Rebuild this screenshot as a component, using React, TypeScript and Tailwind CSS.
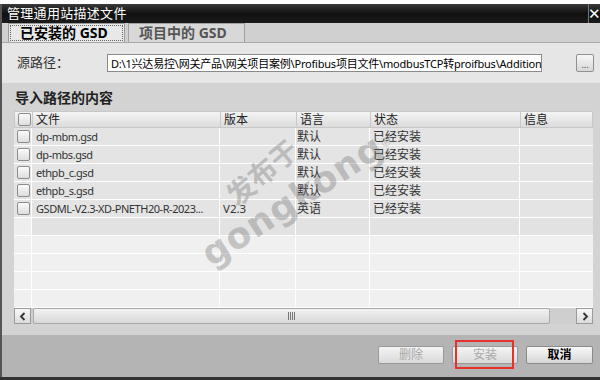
import React from "react";

const FONT = { fontFamily: '"Noto Sans", "Noto Sans CJK SC", sans-serif' };

const rows = [
  { f: "dp-mbm.gsd", v: "", l: "默认", s: "已经安装" },
  { f: "dp-mbs.gsd", v: "", l: "默认", s: "已经安装" },
  { f: "ethpb_c.gsd", v: "", l: "默认", s: "已经安装" },
  { f: "ethpb_s.gsd", v: "", l: "默认", s: "已经安装" },
  { f: "GSDML-V2.3-XD-PNETH20-R-2023...", v: "V2.3", l: "英语", s: "已经安装" },
];

function Check() {
  return (
    <div className="w-[13px] h-[13px] rounded-[2px] border border-[#8c8c8c] bg-gradient-to-b from-[#fafafa] to-[#dedede]" />
  );
}

const cols = "grid grid-cols-[18px_188px_76px_74px_150px_1fr]";

export default function App() {
  return (
    <div className="w-[600px] h-[380px] bg-white flex flex-col overflow-hidden relative text-[#222]" style={FONT}>
      <div className="h-[4px] bg-white" />
      <div className="flex-1 flex flex-col border-l-2 border-[#555] bg-[#d3d3d3]">
        {/* title */}
        <div className="h-[19px] flex items-center bg-gradient-to-b from-[#3a3a3a] via-[#111] to-[#1a1a1a] text-white">
          <span className="pl-[5px] text-[13px] leading-none tracking-[0.3px]">管理通用站描述文件</span>
          <div className="ml-auto h-full w-[12px] border-l border-[#777] flex items-center justify-center text-[15px] leading-none">✕</div>
        </div>
        {/* tabs */}
        <div className="h-[20px] flex items-end pl-[6px] gap-[3px] bg-[#d0d0d0] border-b border-[#a8a8a8]">
          <div className="h-[19px] w-[117px] bg-[#e8e8e8] border border-[#9a9a9a] border-b-0 flex items-center p-[1px]">
            <div className="w-full h-full border border-dotted border-[#666] flex items-center pl-[9px] text-[14px] font-bold leading-none text-black">已安装的 GSD</div>
          </div>
          <div className="h-[19px] w-[117px] bg-[#d8d8d8] border border-[#a0a0a0] border-b-0 flex items-center pl-[10px] text-[14px] font-bold leading-none text-[#555]">项目中的 GSD</div>
        </div>
        {/* source path */}
        <div className="h-[40px] bg-[#e6e6e6] flex items-center pl-[15px] pr-[6px]">
          <span className="text-[13px] w-[90px] text-[#333]">源路径：</span>
          <div className="w-[435px] h-[18px] bg-white border border-[#8a8a8a] flex items-center pl-[3px] overflow-hidden">
            <span className="text-[11px] whitespace-nowrap leading-none text-black tracking-[-0.2px]">D:\1兴达易控\网关产品\网关项目案例\Profibus项目文件\modbusTCP转proifbus\Addition</span>
          </div>
          <div className="ml-auto w-[18px] h-[18px] rounded-[2px] border border-[#909090] bg-gradient-to-b from-[#f6f6f6] to-[#d8d8d8] flex items-end justify-center text-[9px] leading-[12px] text-[#444]">...</div>
        </div>
        {/* section */}
        <div className="flex-1 flex flex-col">
          <div className="h-[28px] flex items-center pl-[13px] text-[14px] font-bold text-[#222]">导入路径的内容</div>
          <div className="ml-[12px] mr-[7px] flex flex-col">
            <div className={`${cols} h-[17px] bg-gradient-to-b from-[#f4f4f4] to-[#dcdcdc] border border-[#c8c8c8] text-[12px] leading-none`}>
              <div className="flex items-center pl-[3px] border-r border-[#c8c8c8]"><Check /></div>
              <div className="flex items-center pl-[3px] border-r border-[#c8c8c8]">文件</div>
              <div className="flex items-center pl-[3px] border-r border-[#c8c8c8]">版本</div>
              <div className="flex items-center pl-[3px] border-r border-[#c8c8c8]">语言</div>
              <div className="flex items-center pl-[3px] border-r border-[#c8c8c8]">状态</div>
              <div className="flex items-center pl-[3px]">信息</div>
            </div>
            {rows.map((r, i) => (
              <div key={i} className={`${cols} h-[18px] bg-[#e4e4e4] border-b border-white text-[11.5px] leading-none text-[#333]`}>
                <div className="flex items-center pl-[3px] border-r border-white"><Check /></div>
                <div className="flex items-center pl-[4px] border-r border-white whitespace-nowrap overflow-hidden text-[11px] tracking-[-0.45px]">{r.f}</div>
                <div className="flex items-center pl-[3px] border-r border-white">{r.v}</div>
                <div className="flex items-center pl-[1px] border-r border-white text-[12px]">{r.l}</div>
                <div className="flex items-center pl-[3px] border-r border-white text-[12px]">{r.s}</div>
                <div className="flex items-center" />
              </div>
            ))}
            <div className={`${cols} h-[18px] bg-[#e2e2e2] border-b border-white`}>
              <div className="bg-[#eeeeee] border-r border-white" />
              <div className="border-r border-white" />
              <div className="border-r border-white" />
              <div className="border-r border-white" />
              <div className="border-r border-white" />
              <div />
            </div>
            {[0, 1, 2, 3].map((i) => (
              <div key={i} className={`${cols} h-[18px] bg-[#f0f0f0] border-b border-white`}>
                <div className="border-r border-white" />
                <div className="border-r border-white" />
                <div className="border-r border-white" />
                <div className="border-r border-white" />
                <div className="border-r border-white" />
                <div />
              </div>
            ))}
            {/* scrollbar */}
            <div className="h-[16px] flex bg-[#cfcfcf]">
              <div className="w-[17px] h-full border border-[#9a9a9a] bg-gradient-to-b from-[#f8f8f8] to-[#dcdcdc] flex items-center justify-center">
                <svg width="8" height="9" viewBox="0 0 8 9"><path d="M5.5 1 L2 4.5 L5.5 8" stroke="#333" strokeWidth="1.8" fill="none" /></svg>
              </div>
              <div className="w-[517px] h-full ml-[2px] border border-[#a8a8a8] rounded-[2px] bg-gradient-to-b from-[#f2f2f2] to-[#d8d8d8] flex items-center justify-center">
                <svg width="7" height="8" viewBox="0 0 7 8"><path d="M0.5 0 V8 M2.5 0 V8 M4.5 0 V8 M6.5 0 V8" stroke="#777" strokeWidth="1" /></svg>
              </div>
              <div className="ml-auto w-[17px] h-full border border-[#9a9a9a] bg-gradient-to-b from-[#f8f8f8] to-[#dcdcdc] flex items-center justify-center">
                <svg width="8" height="9" viewBox="0 0 8 9"><path d="M2.5 1 L6 4.5 L2.5 8" stroke="#333" strokeWidth="1.8" fill="none" /></svg>
              </div>
            </div>
          </div>
          <div className="h-[11px]" />
        </div>
        {/* buttons */}
        <div className="h-[42px] bg-[#b4b4b4] flex items-start justify-end pt-[11px] pr-[7px] gap-[8px]">
          <div className="w-[66px] h-[18px] rounded-[2px] border border-[#9a9a9a] bg-gradient-to-b from-[#f4f4f4] to-[#dadada] flex items-center justify-center text-[12px] leading-none text-[#a8a8a8]">删除</div>
          <div className="w-[66px] h-[18px] rounded-[2px] border border-[#9a9a9a] bg-gradient-to-b from-[#f4f4f4] to-[#dadada] flex items-center justify-center text-[12px] leading-none text-[#a8a8a8]">安装</div>
          <div className="w-[67px] h-[18px] rounded-[2px] border border-[#8a8a8a] bg-gradient-to-b from-[#f8f8f8] to-[#d6d6d6] flex items-center justify-center text-[12px] font-bold leading-none text-black">取消</div>
        </div>
      </div>
      <div className="h-[3px] bg-[#333]" />

      {/* red annotation */}
      <div className="absolute left-[455px] top-[340px] w-[59px] h-[29px] border-2 border-[#e8302c]" />

      {/* watermark */}
      <div className="absolute left-[262px] top-[172px] -translate-x-1/2 -translate-y-1/2 -rotate-[40deg] text-[28px] font-bold leading-none text-[rgba(110,110,110,0.35)] whitespace-nowrap pointer-events-none">发布于</div>
      <div className="absolute left-[298px] top-[197px] -translate-x-1/2 -translate-y-1/2 -rotate-[33deg] text-[36px] font-bold leading-none tracking-[1px] text-[rgba(110,110,110,0.35)] whitespace-nowrap pointer-events-none" style={{ fontFamily: '"DejaVu Sans", sans-serif' }}>gongkong<sup className="text-[12px] font-normal">®</sup></div>
    </div>
  );
}
